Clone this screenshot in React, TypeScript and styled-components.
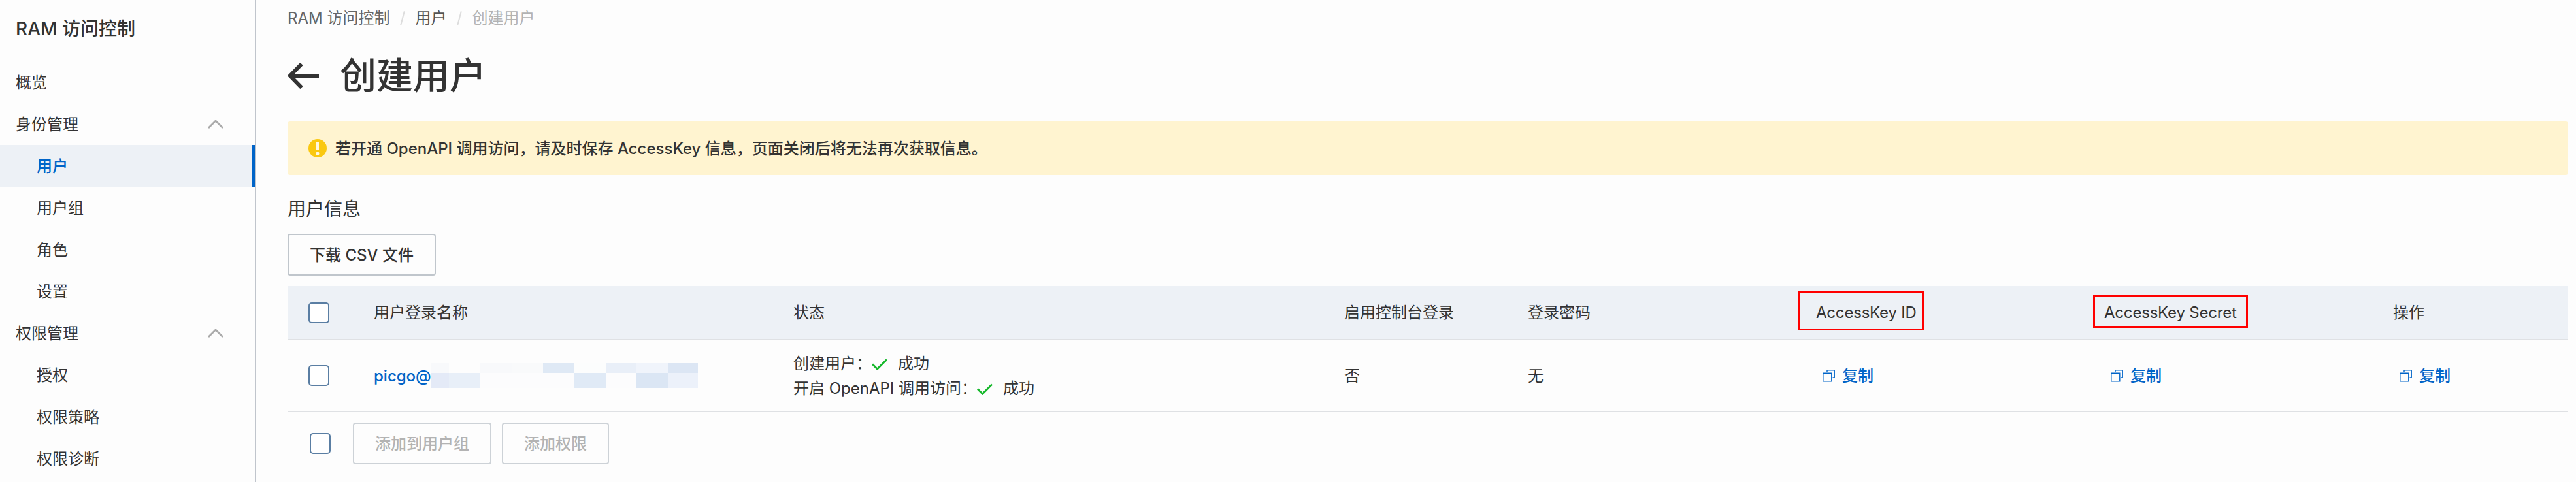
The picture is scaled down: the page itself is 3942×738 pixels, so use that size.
import styled, { createGlobalStyle, css } from 'styled-components';

const colors = {
  bg: '#fdfdfd',
  text: '#333333',
  blue: '#0064c8',
  panel: '#edf1f6',
  line: '#dfe1e4',
  sideLine: '#c0c5cc',
  border: '#c0c6cc',
  borderDisabled: '#cdd2d7',
  disabled: '#b3b3b3',
  check: '#5a7ea3',
  warnBg: '#fff4d0',
  warn: '#fac810',
  green: '#16b82b',
  red: '#ff0000',
};

const groups = [
  { name: '身份管理', items: ['用户', '用户组', '角色', '设置'] },
  { name: '权限管理', items: ['授权', '权限策略', '权限诊断'] },
];

const mosaic = [
  ['#f8f9fb', '#fdfdfd', '#f8f9fb', '#f9fafb', '#dfe9f5', '#fcfdfd', '#e9eff8', '#f0f4fb', '#dce6f4'],
  ['#e4eaf7', '#e8eff8', '#fcfcfd', '#fcfcfd', '#fcfcfd', '#e0eaf6', '#fcfcfd', '#dbe6f4', '#ecf1fa'],
];

function ArrowUp() {
  return (
    <svg width="24" height="14" viewBox="0 0 24 14" fill="none" stroke="#aaaaaa" strokeWidth="2.8">
      <path d="M1 13 L12 2 L23 13" />
    </svg>
  );
}

function BackArrow() {
  return (
    <svg width="48" height="40" viewBox="0 0 48 40" fill="none" stroke={colors.text} strokeWidth="6">
      <path d="M48 20 H5 M21.5 2 L4 20 L21.5 38" />
    </svg>
  );
}

function WarnIcon() {
  return (
    <svg width="28" height="28" viewBox="0 0 28 28">
      <circle cx="14" cy="14" r="14" fill={colors.warn} />
      <path d="M12 4 h4 v12 h-4 z" fill="#fff8e0" />
      <circle cx="14" cy="22" r="2.5" fill="#fff8e0" />
    </svg>
  );
}

function CheckIcon() {
  return (
    <svg width="24" height="18" viewBox="0 0 24 18" fill="none" stroke={colors.green} strokeWidth="3">
      <path d="M1 8.5 L8.5 16 L23 1.5" />
    </svg>
  );
}

function CopyIcon() {
  return (
    <svg width="19" height="19" viewBox="0 0 19 19" fill="none" stroke={colors.blue} strokeWidth="1.4">
      <path d="M0.8 5.2 H13.8 V17.8 H0.8 Z" />
      <path d="M7 3.5 V0.9 H18.2 V12 H15.5" />
    </svg>
  );
}

function CopyLink() {
  return (
    <Copy>
      <CopyIcon />
      复制
    </Copy>
  );
}

function Sidebar() {
  return (
    <Side>
      <SideTitle>RAM 访问控制</SideTitle>
      <SideItem>概览</SideItem>
      {groups.map((group) => (
        <div key={group.name}>
          <SideItem>
            {group.name}
            <ArrowUp />
          </SideItem>
          {group.items.map((item) => (
            <SideItem key={item} $sub $active={item === '用户'}>{item}</SideItem>
          ))}
        </div>
      ))}
    </Side>
  );
}

function UserTable() {
  return (
    <div>
      <Row $head>
        <CheckBox />
        <span>用户登录名称</span>
        <span>状态</span>
        <span>启用控制台登录</span>
        <span>登录密码</span>
        <Marked>
          AccessKey ID
          <Mark $top={-16} $left={-28} $width={193} $height={61} />
        </Marked>
        <Marked>
          AccessKey Secret
          <Mark $top={-10} $left={-17} $width={237} $height={51} />
        </Marked>
        <span>操作</span>
      </Row>
      <Row>
        <CheckBox />
        <UserName>
          <span>picgo@</span>
          <Mosaic>
            {mosaic.flat().map((color, i) => <Tile key={i} $color={color} />)}
          </Mosaic>
        </UserName>
        <div>
          <Status>创建用户：<CheckIcon />成功</Status>
          <Status>开启 OpenAPI 调用访问：<CheckIcon />成功</Status>
        </div>
        <span>否</span>
        <span>无</span>
        <CopyLink />
        <CopyLink />
        <CopyLink />
      </Row>
      <Footer>
        <CheckBox />
        <Button disabled>添加到用户组</Button>
        <Button disabled>添加权限</Button>
      </Footer>
    </div>
  );
}

export default function App() {
  return (
    <Page>
      <Global />
      <Sidebar />
      <Main>
        <Crumbs>
          <Crumb $color="#666666">RAM 访问控制</Crumb>
          <Slash />
          <Crumb $color="#555555">用户</Crumb>
          <Slash />
          <Crumb $color="#b3b3b3">创建用户</Crumb>
        </Crumbs>
        <Heading>
          <BackArrow />
          <h1>创建用户</h1>
        </Heading>
        <Alert>
          <WarnIcon />
          若开通 OpenAPI 调用访问，请及时保存 AccessKey 信息，页面关闭后将无法再次获取信息。
        </Alert>
        <SubTitle>用户信息</SubTitle>
        <Button>下载 CSV 文件</Button>
        <UserTable />
      </Main>
    </Page>
  );
}

const Global = createGlobalStyle`
  * {
    box-sizing: border-box;
  }

  body {
    margin: 0;
    background-color: ${colors.bg};
    color: ${colors.text};
    font-family: Inter, "Noto Sans CJK SC", sans-serif;
    font-size: 24px;
    line-height: 35px;
    overflow: hidden;
  }

  svg {
    flex-shrink: 0;
  }
`;

const Page = styled.div`
  display: flex;
  height: 738px;
  overflow: hidden;
  white-space: nowrap;
`;

const Side = styled.aside`
  width: 392px;
  flex-shrink: 0;
  border-right: 2px solid ${colors.sideLine};
`;

const SideTitle = styled.div`
  height: 94px;
  padding: 24px 0 0 24px;
  font-size: 28px;
  line-height: 40px;
  font-weight: 500;
`;

const SideItem = styled.div<{ $sub?: boolean; $active?: boolean }>`
  display: flex;
  align-items: center;
  justify-content: space-between;
  height: 64px;
  padding: 0 48px 0 ${({ $sub }) => ($sub ? 56 : 24)}px;

  ${({ $active }) => $active && css`
    color: ${colors.blue};
    font-weight: 500;
    background-color: ${colors.panel};
    border-right: 4px solid ${colors.blue};
  `}
`;

const Main = styled.main`
  flex: 1;
  padding: 0 12px 0 48px;
`;

const Crumbs = styled.nav`
  display: flex;
  align-items: center;
  height: 54px;
`;

const Crumb = styled.span<{ $color: string }>`
  color: ${({ $color }) => $color};
`;

const Slash = styled.i`
  width: 2px;
  height: 22px;
  margin: 2px 18px 0 19px;
  background-color: #dddddd;
  transform: rotate(15deg);
`;

const Heading = styled.div`
  display: flex;
  align-items: center;
  gap: 32px;
  height: 124px;
  margin-bottom: 8px;

  h1 {
    margin: 0;
    font-size: 56px;
    line-height: 80px;
    font-weight: 500;
  }
`;

const Alert = styled.div`
  display: flex;
  align-items: center;
  gap: 13px;
  height: 82px;
  padding-left: 32px;
  border-radius: 4px;
  background-color: ${colors.warnBg};
  font-weight: 500;
`;

const SubTitle = styled.div`
  height: 90px;
  padding-top: 32px;
  font-size: 28px;
  line-height: 40px;
`;

const Button = styled.button`
  height: 64px;
  padding: 0 32px;
  border: 2px solid ${colors.border};
  border-radius: 4px;
  background-color: transparent;
  color: ${colors.text};
  font-family: inherit;
  font-size: 24px;
  line-height: 35px;
  font-weight: 500;

  &:disabled {
    border-color: ${colors.borderDisabled};
    color: ${colors.disabled};
  }
`;

const Row = styled.div<{ $head?: boolean }>`
  display: grid;
  grid-template-columns: 100px 642px 843px 281px 441px 441px 442px 1fr;
  align-items: center;
  height: ${({ $head }) => ($head ? 83 : 110)}px;
  margin-top: ${({ $head }) => ($head ? 16 : 0)}px;
  padding-left: 32px;
  border-bottom: 2px solid ${colors.line};
  background-color: ${({ $head }) => ($head ? colors.panel : 'transparent')};
`;

const CheckBox = styled.div`
  width: 32px;
  height: 32px;
  border: 2px solid ${colors.check};
  border-radius: 5px;
  background-color: #ffffff;
`;

const Marked = styled.span`
  position: relative;
  letter-spacing: -0.2px;
`;

const Mark = styled.i<{ $top: number; $left: number; $width: number; $height: number }>`
  position: absolute;
  top: ${({ $top }) => $top}px;
  left: ${({ $left }) => $left}px;
  width: ${({ $width }) => $width}px;
  height: ${({ $height }) => $height}px;
  border: 3px solid ${colors.red};
`;

const UserName = styled.div`
  display: flex;
  align-items: center;
  color: ${colors.blue};
  font-weight: 500;

  span {
    width: 88px;
  }
`;

const Mosaic = styled.div`
  display: grid;
  grid-template-columns: 27px repeat(5, 48px) 47px 48px 46px;
  grid-template-rows: 15px 23px;
`;

const Tile = styled.i<{ $color: string }>`
  background-color: ${({ $color }) => $color};
`;

const Status = styled.div`
  display: flex;
  align-items: center;
  height: 38px;

  svg {
    margin: 4px 16px 0 0;
  }
`;

const Copy = styled.a`
  display: flex;
  align-items: center;
  gap: 11px;
  padding-left: 10px;
  color: ${colors.blue};
  font-weight: 500;
`;

const Footer = styled.div`
  display: flex;
  align-items: center;
  gap: 16px;
  padding: 16px 0 0 34px;

  ${CheckBox} {
    margin-right: 18px;
  }
`;
